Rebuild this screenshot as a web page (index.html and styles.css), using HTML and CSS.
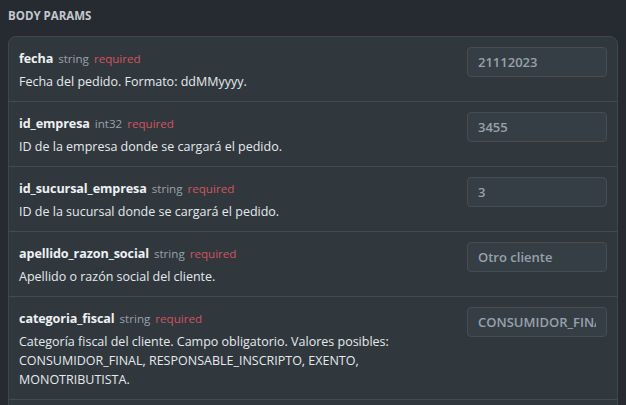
FILE: index.html
```html
<!DOCTYPE html>
<html lang="es">
<head>
<meta charset="utf-8">
<link rel="stylesheet" href="styles.css">
</head>
<body>
<h2 class="section-title">Body Params</h2>
<div class="params">
  <div class="param">
    <div class="param-info">
      <div class="param-head"><span class="param-name">fecha</span><span class="param-type">string</span><span class="param-req">required</span></div>
      <div class="param-desc">Fecha del pedido. Formato: ddMMyyyy.</div>
    </div>
    <input class="param-input" type="text" value="21112023">
  </div>
  <div class="param">
    <div class="param-info">
      <div class="param-head"><span class="param-name">id_empresa</span><span class="param-type">int32</span><span class="param-req">required</span></div>
      <div class="param-desc">ID de la empresa donde se cargará el pedido.</div>
    </div>
    <input class="param-input" type="text" value="3455">
  </div>
  <div class="param">
    <div class="param-info">
      <div class="param-head"><span class="param-name">id_sucursal_empresa</span><span class="param-type">string</span><span class="param-req">required</span></div>
      <div class="param-desc">ID de la sucursal donde se cargará el pedido.</div>
    </div>
    <input class="param-input" type="text" value="3">
  </div>
  <div class="param">
    <div class="param-info">
      <div class="param-head"><span class="param-name">apellido_razon_social</span><span class="param-type">string</span><span class="param-req">required</span></div>
      <div class="param-desc">Apellido o razón social del cliente.</div>
    </div>
    <input class="param-input" type="text" value="Otro cliente">
  </div>
  <div class="param">
    <div class="param-info">
      <div class="param-head"><span class="param-name">categoria_fiscal</span><span class="param-type">string</span><span class="param-req">required</span></div>
      <div class="param-desc">Categoría fiscal del cliente. Campo obligatorio. Valores posibles: CONSUMIDOR_FINAL, RESPONSABLE_INSCRIPTO, EXENTO, MONOTRIBUTISTA.</div>
    </div>
    <input class="param-input" type="text" value="CONSUMIDOR_FINAL">
  </div>
</div>
</body>
</html>
```
FILE: styles.css
```css
html, body {
  margin: 0;
  padding: 0;
  background: #252b31;
  font-family: "Open Sans", "Noto Sans", sans-serif;
  color: #e1e4e7;
  overflow: hidden;
}
body {
  padding: 8px 8px 0 8px;
}
.section-title {
  margin: 0 0 12px 0;
  font-size: 11.5px;
  line-height: 16px;
  font-weight: 700;
  text-transform: uppercase;
  color: #c3c8cd;
}
.params {
  background: #30383e;
  border: 1px solid #3f474e;
  border-radius: 8px;
  padding-bottom: 30px;
}
.param {
  display: flex;
  align-items: flex-start;
  gap: 12px;
  padding: 10px 10px 10px 10px;
  border-bottom: 1px solid #434b52;
}
.param-info {
  flex: 1;
  min-width: 0;
  padding-top: 2px;
}
.param-head {
  display: flex;
  align-items: baseline;
  gap: 5px;
  font-size: 13px;
  line-height: 20px;
}
.param-name {
  font-weight: 700;
  font-size: 12.6px;
  letter-spacing: -0.1px;
  color: #eef0f2;
}
.param-type {
  font-size: 11.6px;
  color: #9aa1a8;
}
.param-req {
  font-size: 11.6px;
  color: #d2535e;
}
.param-desc {
  margin-top: 3px;
  font-size: 12.5px;
  line-height: 19px;
  color: #e6e9ec;
}
.param-input {
  flex: 0 0 auto;
  box-sizing: border-box;
  width: 140px;
  height: 30px;
  margin: 0;
  padding: 0 10px;
  background: #363e45;
  border: 1px solid #464e55;
  border-radius: 4px;
  font-family: "Open Sans", "Noto Sans", sans-serif;
  font-size: 13px;
  font-weight: 600;
  color: #98a1ab;
  outline: none;
}
```
